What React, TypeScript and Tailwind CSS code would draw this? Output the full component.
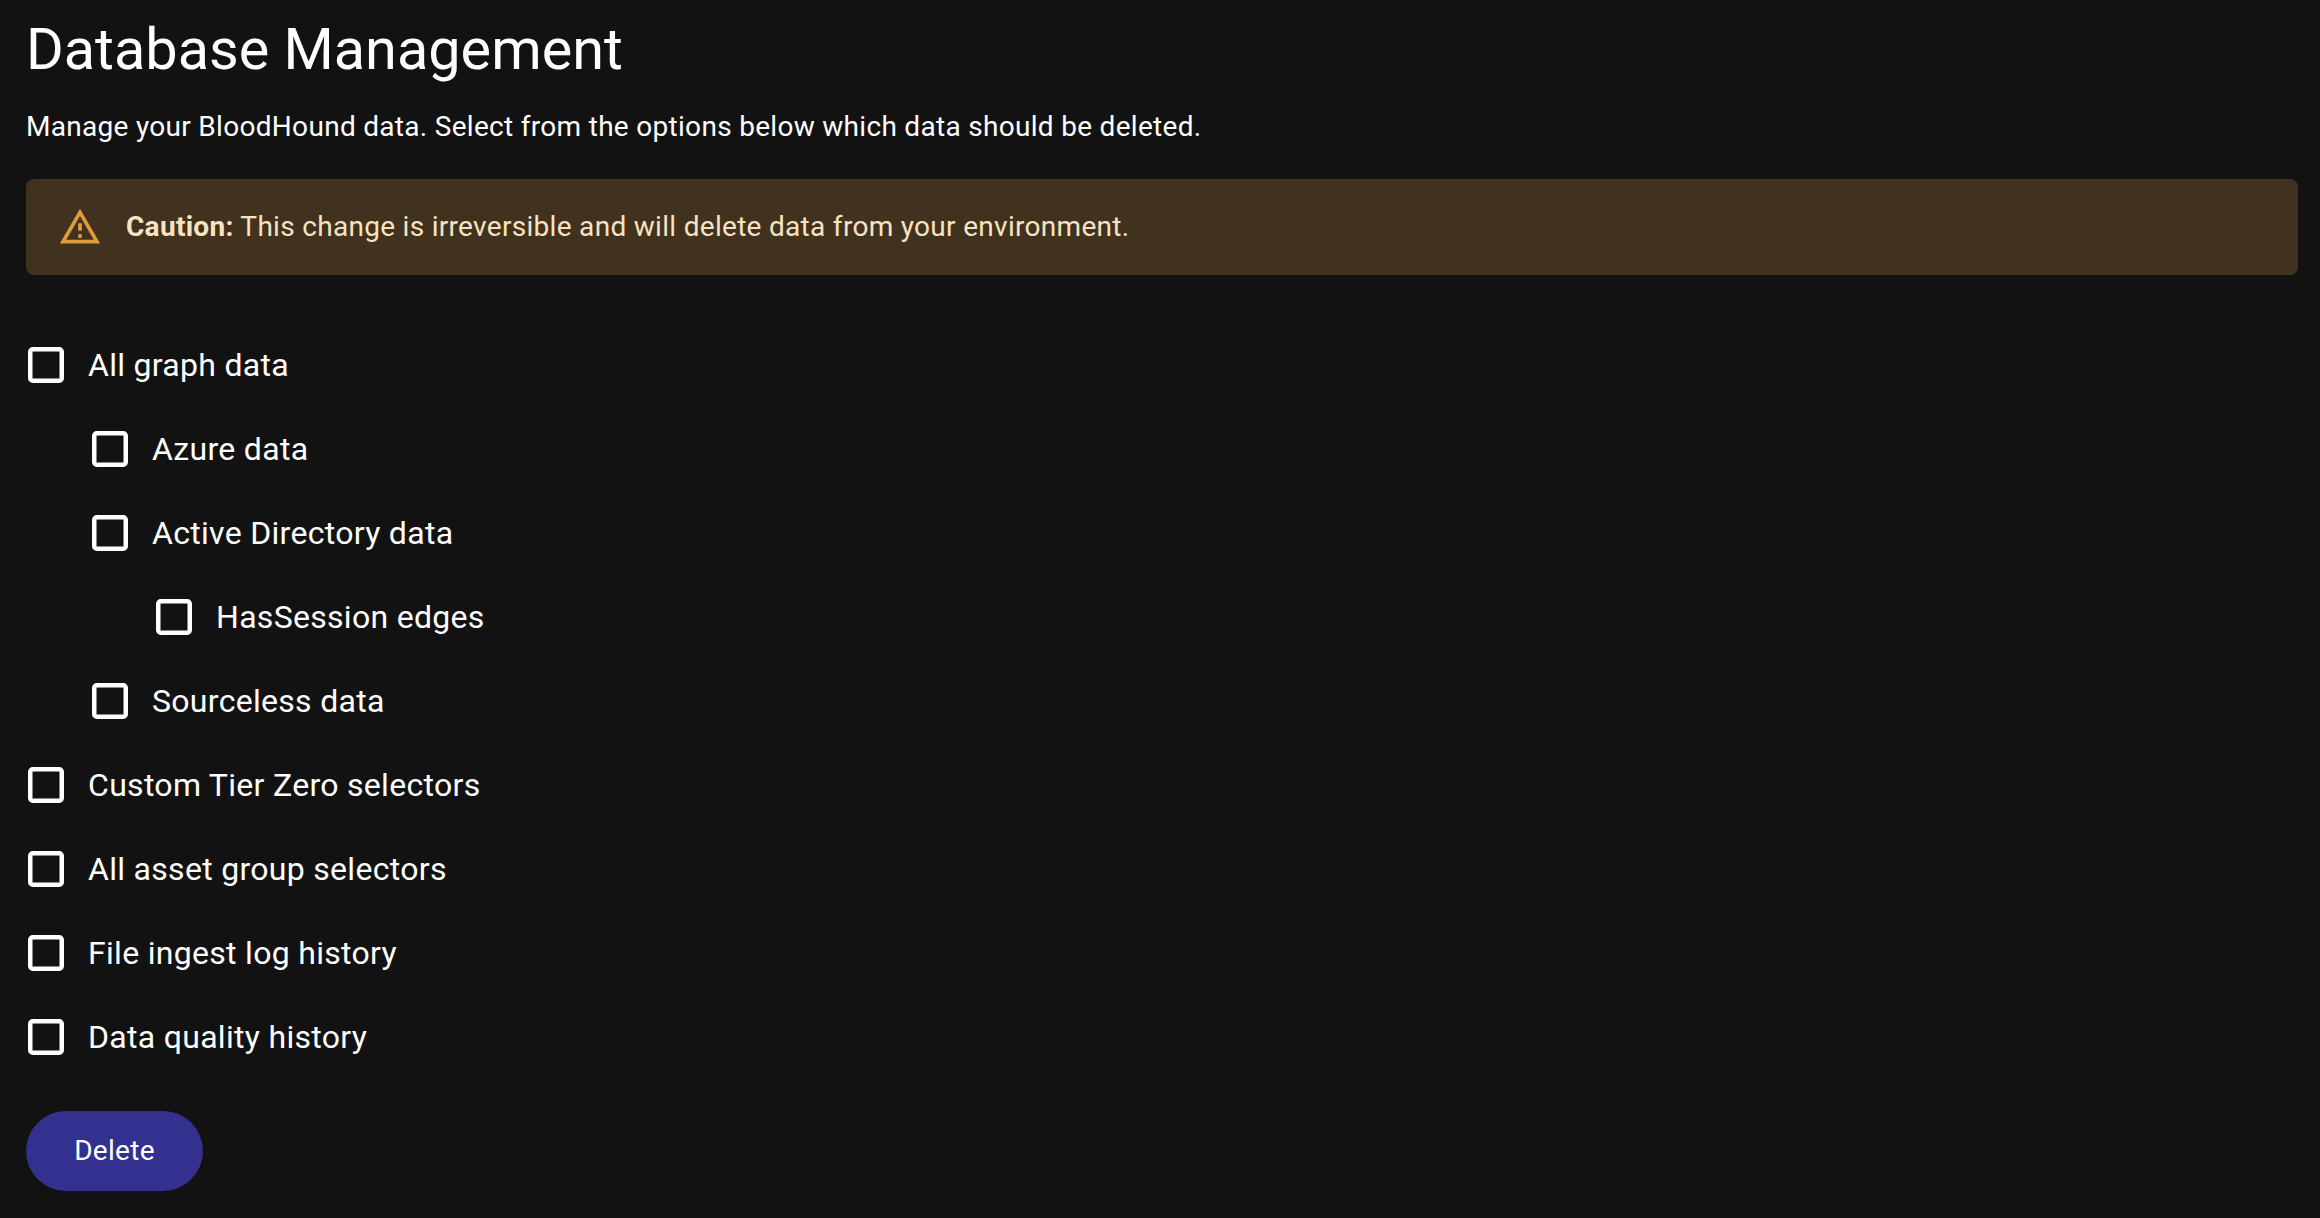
import React from "react";

const options = [
  { label: "All graph data", indent: "" },
  { label: "Azure data", indent: "ml-[64px]" },
  { label: "Active Directory data", indent: "ml-[64px]" },
  { label: "HasSession edges", indent: "ml-[128px]" },
  { label: "Sourceless data", indent: "ml-[64px]" },
  { label: "Custom Tier Zero selectors", indent: "" },
  { label: "All asset group selectors", indent: "" },
  { label: "File ingest log history", indent: "" },
  { label: "Data quality history", indent: "" },
];

const App = () => {
  return (
    <div className="min-h-[1218px] bg-[#121212] pl-[26px] pr-[22px] text-white font-['Roboto',sans-serif]">
      <h1 className="pt-[14px] text-[57.6px] leading-[72px] font-normal">Database Management</h1>
      <p className="mt-[21px] text-[28px] leading-[40px] tracking-[0.3px]">
        Manage your BloodHound data. Select from the options below which data should be deleted.
      </p>

      {/* Warning banner */}
      <div className="mt-[32px] flex h-[96px] items-center rounded-[8px] bg-[#41321f] pl-[32px] text-[28px] tracking-[0.3px] text-[#f8e3c1]">
        <svg className="h-[44px] w-[44px] shrink-0 text-[#e09b3d]" viewBox="0 0 24 24" fill="currentColor">
          <path d="M12 5.99L19.53 19H4.47L12 5.99M12 2L1 21h22L12 2zm1 14h-2v2h2v-2zm0-6h-2v4h2v-4z" />
        </svg>
        <span className="ml-[24px]">
          <strong className="font-bold">Caution:</strong> This change is irreversible and will delete data from your environment.
        </span>
      </div>

      <div className="mt-[48px] flex flex-col">
        {options.map((option) => (
          <label key={option.label} className={`flex h-[84px] items-center ${option.indent}`}>
            <svg className="ml-[2px] h-[36px] w-[36px] shrink-0" viewBox="0 0 36 36" fill="none" stroke="#ffffff" strokeWidth="4.5">
              <rect x="2.25" y="2.25" width="31.5" height="31.5" rx="2.5" />
            </svg>
            <span className="ml-[24px] text-[32px] tracking-[0.3px]">{option.label}</span>
          </label>
        ))}
      </div>

      <button className="mt-[32px] h-[80px] w-[177px] rounded-full bg-[#33308f] text-[28px] font-normal tracking-[0.3px] text-white">
        Delete
      </button>
    </div>
  );
};

export default App;
